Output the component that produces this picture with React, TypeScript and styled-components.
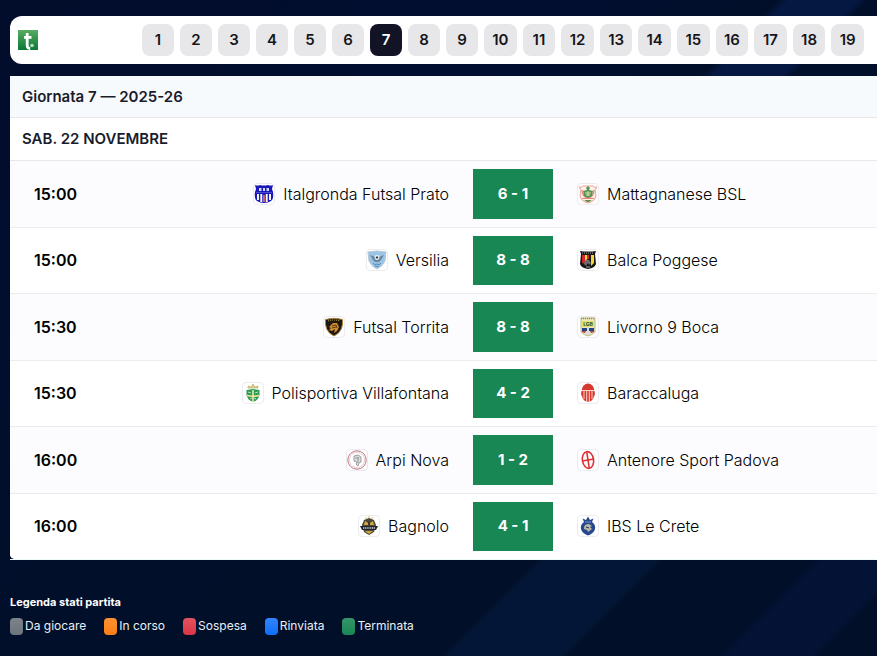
import React from "react";
import styled, { createGlobalStyle } from "styled-components";

const GlobalStyle = createGlobalStyle`
  *, *::before, *::after { box-sizing: border-box; }
  html { height: 100%; }
  body {
    margin: 0;
    min-height: 100vh;
    overflow-x: hidden;
    color: #000;
    font-family: Inter, "Noto Sans", sans-serif;
    background-color: #010f2a;
    background-image:
      linear-gradient(
        135deg,
        #020d2c 0px, #020e30 400px, #010f2a 550px,
        #051842 558px, #051842 606px,
        #010f2a 614px
      ),
      linear-gradient(
        135deg,
        #020d30 0px, #010f2a 500px, #010f28 774px,
        #041638 782px, #041638 858px,
        #010f28 866px, #010f28 970px,
        #041236 978px, #041236 1036px,
        #010f28 1044px
      );
    background-size: 100% 200px, 100% 100%;
    background-repeat: no-repeat;
  }
`;

const Page = styled.main`
  padding: 16px 0 20px 10px;
`;

const RoundBar = styled.nav`
  display: flex;
  align-items: center;
  height: 48px;
  padding: 0 13px 0 8px;
  background: #fff;
  border-radius: 12px 0 0 12px;
`;

const HomeLink = styled.a`
  display: flex;
  width: 124px;
  flex: none;
`;

const RoundList = styled.div`
  display: flex;
  flex: 1;
  gap: 6px;
`;

const RoundButton = styled.button<{ $active: boolean; $wide: boolean }>`
  flex: ${(p) => (p.$wide ? "1 0 32px" : "0 0 32px")};
  height: 32px;
  padding: 0;
  border: 0;
  border-radius: 8px;
  background: ${(p) => (p.$active ? "#121426" : "#e7e7ea")};
  color: ${(p) => (p.$active ? "#fff" : "#16161a")};
  font: 600 15px/30px Inter, sans-serif;
  cursor: pointer;
`;

const Card = styled.section`
  margin-top: 12px;
  border-bottom: 1px solid #eef8fa;
`;

const CardBody = styled.div`
  overflow: hidden;
  background: #fff;
  border-radius: 0 0 0 5px;
`;

const Heading = styled.h1`
  margin: 0;
  padding: 0 12px;
  height: 42px;
  border-bottom: 1px solid #e6e8ec;
  background: #f7fafd;
  color: #1a1c2c;
  font-size: 15px;
  font-weight: 600;
  line-height: 41px;
`;

const DayHeading = styled(Heading)`
  height: 43px;
  background: #fff;
  line-height: 41px;
`;

const Matches = styled.table`
  width: 100%;
  height: 398px;
  table-layout: fixed;
  border-collapse: separate;
  border-spacing: 0;
  font-size: 16px;
  line-height: 20px;
`;

const MatchRow = styled.tr`
  background: #fff;
  &:nth-child(odd) { background: #fcfcfe; }
  &:not(:last-child) > * { border-bottom: 1px solid #ebecf0; }
`;

const TimeCell = styled.th`
  width: 139px;
  padding: 0 0 0 24px;
  font-weight: 600;
  text-align: left;
`;

const TeamCell = styled.td`
  padding: 0 24px;
`;

const Team = styled.div<{ $home?: boolean }>`
  display: flex;
  align-items: center;
  justify-content: ${(p) => (p.$home ? "flex-end" : "flex-start")};
  gap: 8px;
  font-weight: 300;
  white-space: nowrap;
`;

const CrestBox = styled.span`
  display: flex;
  flex: none;
  width: 22px;
  height: 22px;
  border: 1px solid #ececf0;
  border-radius: 4px;
  background: #fff;
`;

const ScoreCell = styled.td`
  width: 80px;
  height: 1px;
  padding: 8px 0;
`;

const Score = styled.div`
  display: flex;
  align-items: center;
  justify-content: center;
  height: 100%;
  min-height: 48px;
  background: #198754;
  color: #fff;
  font-size: 15px;
  font-weight: 700;
`;

const Legend = styled.section`
  margin-top: 34px;
  color: #e9f0f6;
`;

const LegendTitle = styled.h2`
  margin: 0;
  color: #fff;
  font-size: 11px;
  font-weight: 700;
  line-height: 16px;
`;

const LegendList = styled.ul`
  display: flex;
  gap: 18px;
  margin: 7px 0 0;
  padding: 0;
  list-style: none;
`;

const LegendItem = styled.li`
  display: flex;
  align-items: center;
  gap: 2px;
  font-size: 12px;
  line-height: 18px;
`;

const Swatch = styled.span<{ $color: string }>`
  width: 13px;
  height: 17px;
  border-radius: 4px;
  background: ${(p) => p.$color};
`;

const SiteLogo = () => (
  <svg width="20" height="20" viewBox="0 0 20 20" role="img" aria-label="Home">
    <defs>
      <linearGradient id="logo" x1="0" y1="0" x2="0" y2="1">
        <stop offset="0" stopColor="#55ad60" />
        <stop offset="1" stopColor="#0b7837" />
      </linearGradient>
    </defs>
    <rect width="20" height="20" fill="url(#logo)" />
    <path d="M9.2 3v12.5q0 3 3 3M6 7.4h7.5" fill="none" stroke="#fff" strokeWidth="2.8" />
    <circle cx="14" cy="15.5" r="1.8" fill="#b9e0bb" />
  </svg>
);

const crests: Record<string, React.ReactNode> = {
  italgronda: (
    <>
      <path d="M1 1q3 1 5 0 4 1 8 0 3 1 5 0l-1 4 1 3q1 7-2 9-3 2-7 2-4 0-7-2-3-2-2-9l1-3z" fill="#1a18b8" />
      <path d="M4 10v6M7.3 10v8M12.7 10v8M16 10v6" stroke="#fff" strokeWidth="1.9" />
      <path d="M10 11v7" stroke="#d8705f" strokeWidth="1.8" />
      <path d="M5 4h2.5v3H5zM9 4h2v3H9zM12.5 4H15v3h-2.5z" fill="#d5d6ff" />
      <path d="M2 8.5h16" stroke="#4a49d0" />
    </>
  ),
  mattagnanese: (
    <>
      <path d="M1 3q3 1 4-1h10q1 2 4 1l-2 3q2 7-1 10-2 2-6 3-4-1-6-3-3-3-1-10z" fill="#fff1e7" stroke="#e8a096" />
      <path d="M4 6q0 7 6 8 6-1 6-8" fill="none" stroke="#e88778" strokeWidth="1.3" />
      <path d="M10 2l2 2-1 2 4 1-1 5-4 2-4-2-1-5 4-1-1-2z" fill="#4f9759" />
      <path d="M7 9h6M8 11h4M10 7v5" stroke="#e5d9a4" />
      <path d="M4 14.5h12" stroke="#e88778" />
      <path d="M6 16h8l-3 2H9z" fill="#6a8b51" />
    </>
  ),
  versilia: (
    <>
      <path d="M1 2l9-1 9 1-1 9q-2 5-8 8-6-3-8-8z" fill="#9cc4e6" stroke="#b4c8d6" />
      <path d="M3 5l5 2h4l5-2-3 5-2 2H8l-2-2z" fill="#6688a2" />
      <circle cx="10" cy="7.5" r="2.4" fill="#f2f5f7" />
      <path d="M9.2 6.5h1.6l.6 1.3-1.4 1-1.4-1z" fill="#333" />
      <path d="M6 13q2 3 4 1 2 2 4-1M8 16q2 1 4 0" fill="none" stroke="#5489bd" />
    </>
  ),
  balca: (
    <>
      <path d="M2 1q8 1 16 0l-1 3 1 10q-1 4-8 5-7-1-8-5L3 4z" fill="#171515" />
      <path d="M4 5h3v9l-3-1z" fill="#d4272b" />
      <path d="M7 5h2v6H7zM13 5h3v8l-3 3z" fill="#f4d636" />
      <path d="M9 5h2v4H9z" fill="#d4272b" />
      <path d="M6 14q1-6 5-4l2 3-2 2-1-2-2 3z" fill="#6d6d6d" />
      <path d="M4 3h12" stroke="#a7a7a7" strokeDasharray="1 1" />
      <path d="M8 17h4" stroke="#aaa" />
    </>
  ),
  torrita: (
    <>
      <path d="M1.5 2.5Q10 0 18.500 2.500q.5 5-1 9-2 5-7.500 7.500-5.500-2.500-7.500-7.500-1.500-4-1-9z" fill="#1c1914" stroke="#a58334" />
      <path d="M4 4q6-2 12 0" fill="none" stroke="#d3ac45" strokeDasharray="1 1" />
      <path d="M5 10l4-4 4 0 2 4-2 4-3 2 1-4-3 2-3-1 2-2z" fill="#d68c27" />
      <path d="M8 9l4-1 1 3M8 11l4-1" fill="none" stroke="#5f3717" />
    </>
  ),
  livorno: (
    <>
      <path d="M3 1h14v14q-3 3-7 4-4-1-7-4z" fill="#ede6bb" stroke="#bbb783" />
      <path d="M3 1.500h14" stroke="#918f57" strokeWidth="1.5" strokeDasharray="1 1" />
      <rect x="4" y="4" width="12" height="6" fill="#e8e06a" />
      <text x="10" y="9" textAnchor="middle" fontSize="5" fontWeight="700" fill="#24532f">LGB</text>
      <path d="M4 11h12v3H4z" fill="#244783" />
      <path d="M4 14h4l-1 2-3-1zM12 14h4v1l-3 1z" fill="#b63752" />
      <path d="M9 10h2v5l2 2-3 1-3-1 2-2z" fill="#d2dce1" />
    </>
  ),
  villafontana: (
    <>
      <path d="M5 5V3l3 1 2-3 2 3 3-1v2z" fill="#d9cf9b" stroke="#b9a85d" strokeWidth=".6" />
      <path d="M3.500 7l6.500-1 6.500 1v5q-1 5-6.500 7-5.500-2-6.500-7z" fill="#299b59" />
      <path d="M10 7v12M4 12.500l6 1 6-1" stroke="#f4e69c" strokeWidth="1.6" fill="none" />
      <path d="M5 9l3 1M12 10l3-1M7 16l2-1M11 15l2 1" stroke="#b8e2c6" />
    </>
  ),
  baraccaluga: (
    <>
      <path d="M4 6q1-5 6-5.500 5 .5 6 5.500l1 5-2 5q-2 3-5 3-3 0-5-3l-2-5z" fill="#d7382d" />
      <path d="M3 7.500h14M6 8v8M8.700 8v11M11.300 8v11M14 8v8" stroke="#ffe5df" strokeWidth=".9" />
    </>
  ),
  arpi: (
    <>
      <circle cx="10" cy="10" r="9.2" fill="#fff" stroke="#be7581" strokeWidth="1" />
      <circle cx="10" cy="10" r="7.6" fill="none" stroke="#d9b2b9" strokeWidth="1" strokeDasharray="1 .5" />
      <path d="M7 6l4-1 3 2v5l-2 1-1 3-2-2 1-2-3-1zM8 8h4M11 7v6" fill="#ddd" stroke="#8a8a8a" strokeWidth=".8" />
    </>
  ),
  antenore: (
    <g transform="rotate(-9 10 10)">
      <ellipse cx="10" cy="10" rx="5.6" ry="8.4" fill="#fff" stroke="#df3036" strokeWidth="1.6" />
      <path d="M10 2v16M4 10h12" stroke="#df3036" strokeWidth="1.6" />
    </g>
  ),
  bagnolo: (
    <>
      <path d="M5 4l5-2 5 2 2 5-2 7-5 3-5-3-2-7z" fill="#4a473c" />
      <path d="M6 5l3 2h2l3-2 1 4H5z" fill="#d4ab37" />
      <path d="M9 6h2v3H9z" fill="#38352b" />
      <path d="M7 1v2M10 0v2M13 1v2" stroke="#dfc262" />
      <path d="M1 10h18l-2 4H3z" fill="#20252d" />
      <path d="M4 12h12" stroke="#ccc" strokeWidth="1.3" strokeDasharray="1.2 .6" />
      <path d="M6 15h8l-4 3z" fill="#cda637" />
    </>
  ),
  crete: (
    <>
      <path d="M6 6L4.500 2.500 8 4l2-3.500L12 4l3.500-1.500L14 6q4 3 3 7-1 4-7 6.500Q4 17 3 13 2 9 6 6z" fill="#254891" />
      <path d="M6 12q0-4 5-4l3 2-2 1 2 2-4 3-1-2-3-1z" fill="#b9b9a1" />
      <path d="M7 6h6" stroke="#7d97c6" />
      <path d="M8 11l3 1" stroke="#1c3468" />
    </>
  ),
};

const Crest = ({ name }: { name: string }) => (
  <CrestBox aria-hidden="true">
    <svg width="20" height="20" viewBox="0 0 20 20">{crests[name]}</svg>
  </CrestBox>
);

const matches = [
  { time: "15:00", home: "Italgronda Futsal Prato", homeCrest: "italgronda", score: "6 - 1", away: "Mattagnanese BSL", awayCrest: "mattagnanese" },
  { time: "15:00", home: "Versilia", homeCrest: "versilia", score: "8 - 8", away: "Balca Poggese", awayCrest: "balca" },
  { time: "15:30", home: "Futsal Torrita", homeCrest: "torrita", score: "8 - 8", away: "Livorno 9 Boca", awayCrest: "livorno" },
  { time: "15:30", home: "Polisportiva Villafontana", homeCrest: "villafontana", score: "4 - 2", away: "Baraccaluga", awayCrest: "baraccaluga" },
  { time: "16:00", home: "Arpi Nova", homeCrest: "arpi", score: "1 - 2", away: "Antenore Sport Padova", awayCrest: "antenore" },
  { time: "16:00", home: "Bagnolo", homeCrest: "bagnolo", score: "4 - 1", away: "IBS Le Crete", awayCrest: "crete" },
];

const states = [
  { label: "Da giocare", color: "linear-gradient(#7c8388, #6c757d)" },
  { label: "In corso", color: "linear-gradient(#fd9133, #fd7e14)" },
  { label: "Sospesa", color: "linear-gradient(#e25260, #dc3545)" },
  { label: "Rinviata", color: "linear-gradient(#3384fd, #0d6efd)" },
  { label: "Terminata", color: "linear-gradient(#35946a, #198754)" },
];

export default function App() {
  const [round, setRound] = React.useState(7);
  return (
    <>
      <GlobalStyle />
      <Page>
        <RoundBar aria-label="Giornate">
          <HomeLink href="#"><SiteLogo /></HomeLink>
          <RoundList>
            {Array.from({ length: 19 }, (_, i) => i + 1).map((n) => (
              <RoundButton key={n} type="button" $active={n === round} $wide={n > 9} onClick={() => setRound(n)}>
                {n}
              </RoundButton>
            ))}
          </RoundList>
        </RoundBar>
        <Card>
          <CardBody>
            <Heading>Giornata {round} — 2025-26</Heading>
            <DayHeading as="h2">SAB. 22 NOVEMBRE</DayHeading>
            <Matches>
              <tbody>
                {matches.map((m) => (
                  <MatchRow key={m.home}>
                    <TimeCell scope="row">{m.time}</TimeCell>
                    <TeamCell><Team $home><Crest name={m.homeCrest} />{m.home}</Team></TeamCell>
                    <ScoreCell><Score>{m.score}</Score></ScoreCell>
                    <TeamCell><Team><Crest name={m.awayCrest} />{m.away}</Team></TeamCell>
                  </MatchRow>
                ))}
              </tbody>
            </Matches>
          </CardBody>
        </Card>
        <Legend>
          <LegendTitle>Legenda stati partita</LegendTitle>
          <LegendList>
            {states.map((s) => (
              <LegendItem key={s.label}><Swatch $color={s.color} />{s.label}</LegendItem>
            ))}
          </LegendList>
        </Legend>
      </Page>
    </>
  );
}
